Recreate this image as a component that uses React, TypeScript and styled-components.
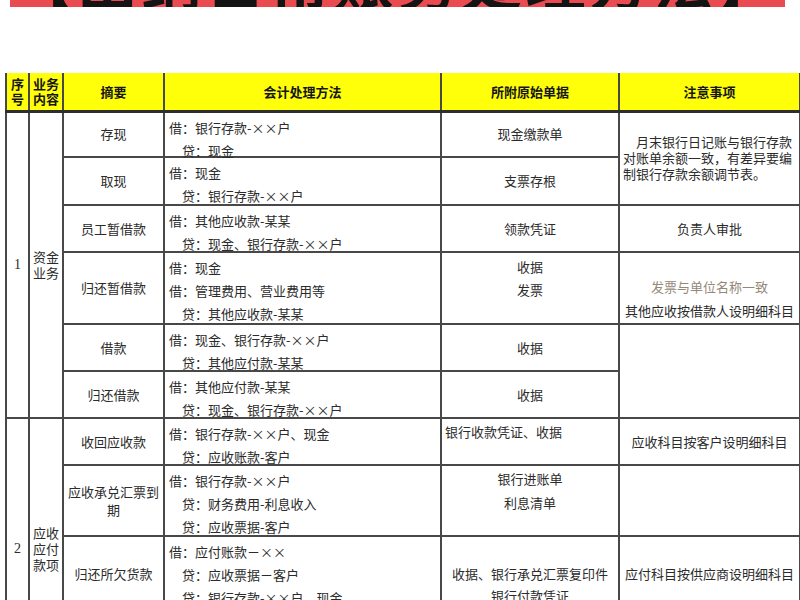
import React from "react";
import styled, { createGlobalStyle } from "styled-components";

const GlobalStyle = createGlobalStyle`
  body {
    margin: 0;
    background: #fff;
    font-family: "Noto Sans CJK SC", "Noto Sans", sans-serif;
    color: #2b2b2b;
  }
`;

const Page = styled.div`
  width: 800px;
  height: 600px;
  overflow: hidden;
`;

// the poster title is cut off by the photo, only its lower edge shows
const TitleBar = styled.div`
  margin: 0 15px 0 10px;
  height: 7px;
  background: #ea4b51;
  overflow: hidden;
  display: flex;
  justify-content: center;
  align-items: flex-end;
`;

const TitleText = styled.div`
  font-size: 60px;
  line-height: 60px;
  font-weight: 700;
  color: #141414;
  letter-spacing: 4px;
  white-space: nowrap;
  margin-bottom: -3px;
`;

const Sheet = styled.table`
  margin: 66px 0 0 5px;
  width: 794px;
  border-collapse: collapse;
  table-layout: fixed;
  font-size: 13px;
`;

const Col = styled.col<{ $w: number }>`
  width: ${(p) => p.$w}px;
`;

const HeadRow = styled.tr`
  height: 38px;
  background: #ffff0a;
`;

const HeadCell = styled.th`
  border: 2px solid #484848;
  border-top: none;
  border-bottom: 3px solid #2e2e2e;
  padding: 0;
  font-weight: 700;
  font-size: 13px;
  line-height: 15px;
  color: #161616;
  text-align: center;
  vertical-align: middle;
`;

const Row = styled.tr<{ $h: number }>`
  height: ${(p) => p.$h}px;
`;

const Cell = styled.td`
  border: 2px solid #484848;
  padding: 0;
  vertical-align: middle;
`;

const SeqCell = styled(Cell)`
  font-family: "Liberation Serif", serif;
  font-size: 14px;
  text-align: center;
`;

const CatCell = styled(Cell)`
  text-align: center;
  line-height: 16px;
  padding: 0 2px;
`;

const SummaryCell = styled(Cell)`
  text-align: center;
  line-height: 18px;
  padding: 0 4px;
`;

const EntryCell = styled(Cell)`
  vertical-align: top;
  padding: 3px 4px 0;
  line-height: 23px;
`;

// last line keeps its place but doesn't push the row taller
const EntryLine = styled.div<{ $credit?: boolean }>`
  padding-left: ${(p) => (p.$credit ? 13 : 0)}px;
  white-space: nowrap;
  height: 23px;

  &:last-child {
    height: 17px;
  }
`;

// the sheet's × takes a full character cell
const Mul = styled.span`
  display: inline-block;
  width: 13px;
  text-align: center;
`;

const DocCell = styled(Cell)<{ $top?: number; $left?: boolean; $lh?: number }>`
  vertical-align: ${(p) => (p.$top !== undefined ? "top" : "middle")};
  padding: ${(p) => p.$top ?? 0}px 3px 0;
  text-align: ${(p) => (p.$left ? "left" : "center")};
  line-height: ${(p) => p.$lh ?? 20}px;
  white-space: nowrap;
`;

const NoteCell = styled(Cell)<{ $top?: number; $lh?: number }>`
  vertical-align: ${(p) => (p.$top !== undefined ? "top" : "middle")};
  padding: ${(p) => p.$top ?? 0}px 3px 0;
  text-align: center;
  line-height: ${(p) => p.$lh ?? 20}px;
  white-space: nowrap;
`;

const NotePara = styled.div`
  text-align: left;
  line-height: 16px;
  text-indent: 13px;
`;

const Faint = styled.div`
  color: #948878;
`;

type Entry = { text: string; credit?: boolean };

interface IRow {
  h: number;
  summary: string;
  entries: Entry[];
}

const d = (text: string): Entry => ({ text });
const c = (text: string): Entry => ({ text, credit: true });

const cashRows: IRow[] = [
  { h: 46, summary: "存现", entries: [d("借：银行存款-××户"), c("贷：现金")] },
  { h: 48, summary: "取现", entries: [d("借：现金"), c("贷：银行存款-××户")] },
  {
    h: 47,
    summary: "员工暂借款",
    entries: [d("借：其他应收款-某某"), c("贷：现金、银行存款-××户")],
  },
  {
    h: 70,
    summary: "归还暂借款",
    entries: [d("借：现金"), d("借：管理费用、营业费用等"), c("贷：其他应收款-某某")],
  },
  {
    h: 47,
    summary: "借款",
    entries: [d("借：现金、银行存款-××户"), c("贷：其他应付款-某某")],
  },
  {
    h: 47,
    summary: "归还借款",
    entries: [d("借：其他应付款-某某"), c("贷：现金、银行存款-××户")],
  },
];

const payRows: IRow[] = [
  {
    h: 47,
    summary: "收回应收款",
    entries: [d("借：银行存款-××户、现金"), c("贷：应收账款-客户")],
  },
  {
    h: 71,
    summary: "应收承兑汇票到期",
    entries: [d("借：银行存款-××户"), c("贷：财务费用-利息收入"), c("贷：应收票据-客户")],
  },
  {
    h: 76,
    summary: "归还所欠货款",
    entries: [d("借：应付账款－××"), c("贷：应收票据－客户"), c("贷：银行存款-××户、现金")],
  },
  { h: 68, summary: "", entries: [] },
];

function withMul(text: string) {
  const parts = text.split("×");
  return parts.map((part, i) => (
    <React.Fragment key={i}>
      {part}
      {i < parts.length - 1 && <Mul>×</Mul>}
    </React.Fragment>
  ));
}

function Entries({ list }: { list: Entry[] }) {
  return (
    <EntryCell>
      {list.map((e) => (
        <EntryLine key={e.text} $credit={e.credit}>
          {withMul(e.text)}
        </EntryLine>
      ))}
    </EntryCell>
  );
}

export default function App() {
  const [r1, r2, r3, r4, r5, r6] = cashRows;
  const [p1, p2, p3, p4] = payRows;

  return (
    <Page>
      <GlobalStyle />
      <TitleBar>
        <TitleText>【出纳日常账务处理方法】</TitleText>
      </TitleBar>

      <Sheet>
        <colgroup>
          <Col $w={23} />
          <Col $w={34} />
          <Col $w={101} />
          <Col $w={277} />
          <Col $w={178} />
          <Col $w={181} />
        </colgroup>
        <thead>
          <HeadRow>
            <HeadCell>
              序<br />号
            </HeadCell>
            <HeadCell>
              业务<br />内容
            </HeadCell>
            <HeadCell>摘要</HeadCell>
            <HeadCell>会计处理方法</HeadCell>
            <HeadCell>所附原始单据</HeadCell>
            <HeadCell>注意事项</HeadCell>
          </HeadRow>
        </thead>
        <tbody>
          <Row $h={r1.h}>
            <SeqCell rowSpan={6}>1</SeqCell>
            <CatCell rowSpan={6}>
              资金<br />业务
            </CatCell>
            <SummaryCell>{r1.summary}</SummaryCell>
            <Entries list={r1.entries} />
            <DocCell>现金缴款单</DocCell>
            <NoteCell rowSpan={2}>
              <NotePara>
                月末银行日记账与银行存款
                <br />
                对账单余额一致，有差异要编
                <br />
                制银行存款余额调节表。
              </NotePara>
            </NoteCell>
          </Row>
          <Row $h={r2.h}>
            <SummaryCell>{r2.summary}</SummaryCell>
            <Entries list={r2.entries} />
            <DocCell>支票存根</DocCell>
          </Row>
          <Row $h={r3.h}>
            <SummaryCell>{r3.summary}</SummaryCell>
            <Entries list={r3.entries} />
            <DocCell>领款凭证</DocCell>
            <NoteCell>负责人审批</NoteCell>
          </Row>
          <Row $h={r4.h}>
            <SummaryCell>{r4.summary}</SummaryCell>
            <Entries list={r4.entries} />
            <DocCell $top={2} $lh={23}>
              收据
              <br />
              发票
            </DocCell>
            <NoteCell $top={22} $lh={24}>
              <Faint>发票与单位名称一致</Faint>
              其他应收按借款人设明细科目
            </NoteCell>
          </Row>
          <Row $h={r5.h}>
            <SummaryCell>{r5.summary}</SummaryCell>
            <Entries list={r5.entries} />
            <DocCell>收据</DocCell>
            <NoteCell rowSpan={2} />
          </Row>
          <Row $h={r6.h}>
            <SummaryCell>{r6.summary}</SummaryCell>
            <Entries list={r6.entries} />
            <DocCell>收据</DocCell>
          </Row>

          <Row $h={p1.h}>
            <SeqCell rowSpan={4}>2</SeqCell>
            <CatCell rowSpan={4}>
              应收
              <br />
              应付
              <br />
              款项
            </CatCell>
            <SummaryCell>{p1.summary}</SummaryCell>
            <Entries list={p1.entries} />
            <DocCell $top={1} $lh={23} $left>
              银行收款凭证、收据
            </DocCell>
            <NoteCell>应收科目按客户设明细科目</NoteCell>
          </Row>
          <Row $h={p2.h}>
            <SummaryCell>{p2.summary}</SummaryCell>
            <Entries list={p2.entries} />
            <DocCell $top={1} $lh={24}>
              银行进账单
              <br />
              利息清单
            </DocCell>
            <NoteCell />
          </Row>
          <Row $h={p3.h}>
            <SummaryCell>{p3.summary}</SummaryCell>
            <Entries list={p3.entries} />
            <DocCell $top={26} $lh={22}>
              收据、银行承兑汇票复印件
              <br />
              银行付款凭证
            </DocCell>
            <NoteCell>应付科目按供应商设明细科目</NoteCell>
          </Row>
          <Row $h={p4.h}>
            <SummaryCell />
            <Entries list={p4.entries} />
            <DocCell />
            <NoteCell />
          </Row>
        </tbody>
      </Sheet>
    </Page>
  );
}
